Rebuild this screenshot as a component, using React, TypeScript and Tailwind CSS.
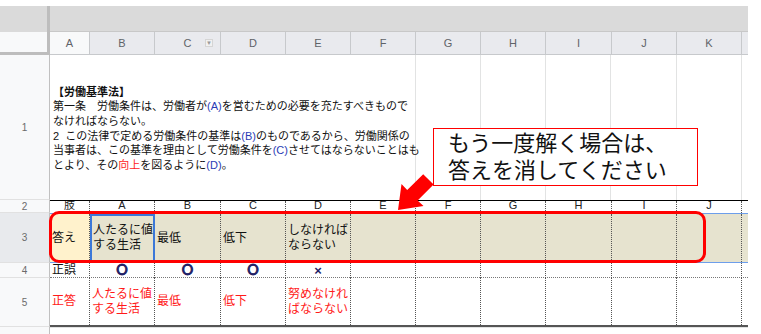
const jp = "font-['Liberation_Sans','Noto_Sans_CJK_JP',sans-serif]";

const headers = ["A", "B", "C", "D", "E", "F", "G", "H", "I", "J", "K"];
const row2 = ["肢", "A", "B", "C", "D", "E", "F", "G", "H", "I", "J"];

function RowHead({ n, h, dark }: { n?: string; h: string; dark?: boolean }) {
  return (
    <div
      className={`${h} w-[50px] shrink-0 flex items-center justify-center border-r border-b border-r-[#c0c0c0] border-b-[#e1e1e1] text-[10px] text-[#6b6b6b] font-['Liberation_Sans',sans-serif] ${
        dark ? "bg-[#e8eaed]" : "bg-[#f8f9fa]"
      }`}
    >
      {n}
    </div>
  );
}

function Cell({ children, className = "" }: { children?: React.ReactNode; className?: string }) {
  return (
    <div className={`border-r border-dotted border-r-[#555] flex items-center pl-[2px] leading-[15px] ${className}`}>
      {children}
    </div>
  );
}

export default function App() {
  return (
    <div className={`relative w-[761px] h-[334px] overflow-hidden bg-white ${jp}`}>
      {/* toolbar strip */}
      <div className="h-[6px]" />
      <div className="flex h-[26px] w-[748px]">
        <div className="w-[47px] bg-[#dadada]" />
        <div className="w-[3px] bg-[#bdbdbd]" />
        <div className="flex-1 bg-[#dadada] border-b border-[#c8c8c8]" />
      </div>

      {/* column headers */}
      <div className="flex h-[23px] w-[748px]">
        <div className="w-[47px] bg-[#f8f9fa] border-b-[3px] border-[#bdbdbd]" />
        <div className="w-[3px] bg-[#bdbdbd]" />
        <div className="grid grid-cols-[40px_65px_66px_65px_65px_65px_65px_65px_66px_65px_65px_6px] flex-1 font-['Liberation_Sans',sans-serif] text-[11px] text-[#5f6368]">
          {headers.map((h, i) => (
            <div
              key={h}
              className={`relative flex items-center justify-center border-r border-b border-[#c7c9cc] ${
                i === 0 ? "bg-[#f8f9fa]" : "bg-[#e9eaee]"
              }`}
            >
              {h}
              {h === "C" && (
                <span className="absolute left-[50px] top-[7px] w-[8px] h-[8px] bg-[#f1f1f1] border border-[#d5d5d5] flex items-center justify-center text-[6px] leading-none text-[#9a9a9a]">
                  ▼
                </span>
              )}
            </div>
          ))}
          <div className="bg-[#e9eaee] border-b border-[#c7c9cc]" />
        </div>
      </div>

      {/* row 1 */}
      <div className="flex h-[145px]">
        <RowHead n="1" h="h-[145px]" />
        <div className="grid grid-cols-[366px_65px_65px_65px_66px_65px_6px] w-[698px]">
          <div className="border-r border-[#e2e3e3] flex items-center pl-[3px] pt-[2px] text-[11px] leading-[14.6px] text-[#111] whitespace-nowrap">
            <div>
              <div className="font-bold">【労働基準法】</div>
              <div>
                第一条　労働条件は、労働者が<span className="text-[#2a3bb5]">(A)</span>を営むための必要を充たすべきもので
              </div>
              <div>なければならない。</div>
              <div>
                2&nbsp;&nbsp;この法律で定める労働条件の基準は<span className="text-[#2a3bb5]">(B)</span>のものであるから、労働関係の
              </div>
              <div>
                当事者は、この基準を理由として労働条件を<span className="text-[#2a3bb5]">(C)</span>させてはならないことはも
              </div>
              <div>
                とより、その<span className="text-[#ff1a1a]">向上</span>を図るように<span className="text-[#2a3bb5]">(D)</span>。
              </div>
            </div>
          </div>
          {[0, 1, 2, 3, 4].map((i) => (
            <div key={i} className="border-r border-[#e2e3e3]" />
          ))}
          <div />
        </div>
      </div>

      {/* row 2 */}
      <div className="flex h-[13px]">
        <RowHead n="2" h="h-[13px]" />
        <div className="grid grid-cols-[40px_65px_66px_65px_65px_65px_65px_65px_66px_65px_65px_6px] w-[698px] border-t border-black">
          {row2.map((t, i) => (
            <div key={i} className="border-r border-dotted border-r-[#555] overflow-hidden flex justify-center">
              <span className="text-[11px] leading-[11px] text-[#222] mt-[-1px]">{t}</span>
            </div>
          ))}
          <div />
        </div>
      </div>

      {/* row 3 */}
      <div className="flex h-[50px]">
        <RowHead n="3" h="h-[50px]" dark />
        <div className="grid grid-cols-[40px_65px_66px_65px_65px_65px_65px_65px_66px_65px_65px_6px] w-[698px] border-y border-[#6d9eeb] bg-[#e6e3cf] text-[12px] text-[#111]">
          <Cell className="bg-[#fff2cc]">答え</Cell>
          <div className="border-2 border-[#3c78d8] flex items-center pl-[1px] leading-[15px]">
            <div>
              人たるに値
              <br />
              する生活
            </div>
          </div>
          <Cell>最低</Cell>
          <Cell>低下</Cell>
          <Cell>
            <div>
              しなければ
              <br />
              ならない
            </div>
          </Cell>
          <Cell />
          <Cell />
          <Cell />
          <Cell />
          <Cell />
          <Cell />
          <div />
        </div>
      </div>

      {/* row 4 */}
      <div className="flex h-[15px]">
        <RowHead n="4" h="h-[15px]" />
        <div className="grid grid-cols-[40px_65px_66px_65px_65px_65px_65px_65px_66px_65px_65px_6px] w-[698px] border-b border-dotted border-b-[#777] text-[12px] text-[#111]">
          <Cell>正誤</Cell>
          {["〇", "〇", "〇"].map((s, i) => (
            <Cell
              key={i}
              className="justify-center !pl-0 font-bold text-[#1f1f66] text-[11px] [-webkit-text-stroke:1px_#1f1f66]"
            >
              {s}
            </Cell>
          ))}
          <Cell className="justify-center !pl-0 font-bold text-[#1f1f66] text-[13px]">×</Cell>
          <Cell />
          <Cell />
          <Cell />
          <Cell />
          <Cell />
          <Cell />
          <div />
        </div>
      </div>

      {/* row 5 */}
      <div className="flex h-[49px]">
        <RowHead n="5" h="h-[49px]" />
        <div className="grid grid-cols-[40px_65px_66px_65px_65px_65px_65px_65px_66px_65px_65px_6px] w-[698px] border-b-2 border-[#555] text-[12px] text-[#ff1a1a]">
          <Cell>正答</Cell>
          <Cell>
            <div>
              人たるに値
              <br />
              する生活
            </div>
          </Cell>
          <Cell>最低</Cell>
          <Cell>低下</Cell>
          <Cell>
            <div>
              努めなけれ
              <br />
              ばならない
            </div>
          </Cell>
          <Cell />
          <Cell />
          <Cell />
          <Cell />
          <Cell />
          <Cell />
          <div />
        </div>
      </div>

      {/* bottom strip */}
      <div className="flex h-[7px]">
        <div className="w-[50px] bg-[#f8f9fa] border-r border-[#c0c0c0]" />
        <div className="w-[698px] border-t border-[#e2e3e3]" />
      </div>

      {/* red highlight around answer row */}
      <div className="absolute left-[49px] top-[211px] w-[657px] h-[52px] border-[3px] border-[#ff0000] rounded-[10px]" />

      {/* callout */}
      <div className="absolute left-[433px] top-[128px] w-[265px] h-[58px] bg-white border-[1.5px] border-[#ff0000] pl-[14px] pt-[1px] text-[22px] leading-[27px] text-[#111]">
        もう一度解く場合は、
        <br />
        答えを消してください
      </div>

      {/* arrow */}
      <svg className="absolute left-0 top-0 pointer-events-none" width="761" height="334" viewBox="0 0 761 334">
        <polygon
          fill="#ff0000"
          points="398,210 423.5,206 417.6,200.4 433.6,184.6 423.2,174.2 407.2,190 401.5,184"
        />
      </svg>
    </div>
  );
}
